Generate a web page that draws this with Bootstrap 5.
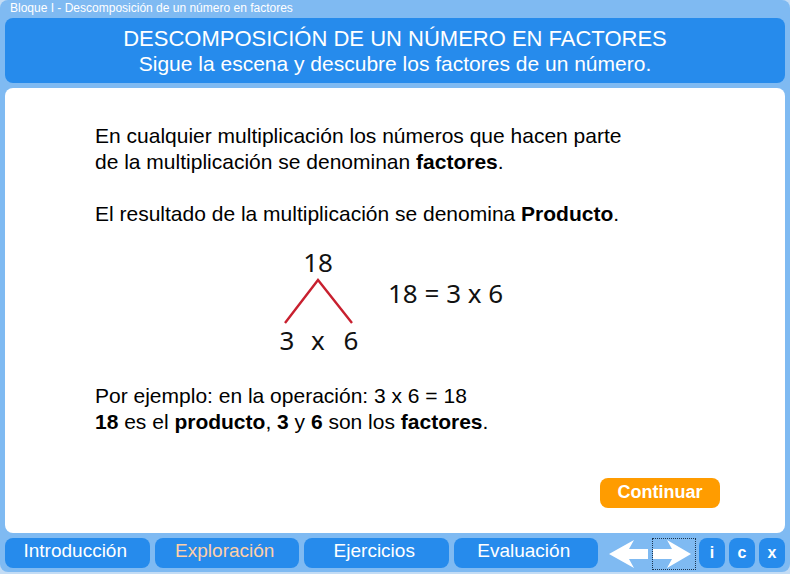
<!DOCTYPE html>
<html lang="es">
<head>
<meta charset="utf-8">
<meta name="viewport" content="width=device-width, initial-scale=1">
<title>Descomposición de un número en factores</title>
<link rel="stylesheet" href="https://cdn.jsdelivr.net/npm/bootstrap@5.3.0/dist/css/bootstrap.min.css">
<style>
  body { font-family: "Liberation Sans", Arial, sans-serif; background: #c3dcf5; color: #000; }
  .lesson { background: #7fbaf2; padding: 0 5px 4px; border-radius: 8px; margin-bottom: 2px; min-height: calc(100vh - 2px); }
  .crumb { font-size: 12px; line-height: 16px; height: 18px; padding-left: 5px; color: #fff; }
  .banner { background: #268bec; color: #fff; border-radius: 8px; padding: 8px 0 7px; margin-bottom: 5px; font-size: 21px; line-height: 25px; }
  .banner h1, .banner p { font-size: inherit; line-height: inherit; font-weight: 400; margin: 0; }
  .banner h1 { font-size: 22px; }
  .sheet { background: #fff; border-radius: 8px; padding: 35px 65px 25px 90px; margin-bottom: 5px; font-size: 21px; line-height: 26px; }
  .sheet p { margin: 0 0 26px; }
  .sheet .example { margin: 0; }
  .figure-row { font-family: "Noto Sans", "Open Sans", sans-serif; font-size: 26px; gap: 26px; padding-left: 182px; margin-top: -12px; margin-bottom: 24px; }
  .figure-row .equation { padding-top: 34px; line-height: 36px; color: #111; }
  .go { background: #ff9c00; color: #fff; border: 0; border-radius: 8px; width: 120px; height: 30px; font-size: 18px; line-height: 28px; font-weight: 700; padding: 0 0 2px; }
  .go:hover { background: #f09200; color: #fff; }
  .foot { gap: 3px; }
  .tabs { gap: 5px; }
  .tab { background: #268bec; color: #fff; border-radius: 8px; height: 30px; font-size: 19px; line-height: 26px; text-align: center; text-decoration: none; padding-right: 4px; }
  .tab.current { color: #ffd0a8; }
  .tab:hover { color: #ffd0a8; }
  .arrows { margin-left: 7px; }
  .arrow { background: none; border: 1px solid transparent; padding: 0; width: 44px; height: 32px; line-height: 0; margin-bottom: -2px; }
  .arrow.focused { border: 1px dotted #1c3550; }
  .tools { gap: 4px; }
  .tool { background: #268bec; color: #fff; border: 0; border-radius: 8px; width: 26px; height: 30px; padding: 0; font-size: 16px; font-weight: 700; line-height: 30px; }
</style>
<script src="https://cdn.jsdelivr.net/npm/bootstrap@5.3.0/dist/js/bootstrap.bundle.min.js"></script>
</head>
<body>
<div class="lesson d-flex flex-column">
  <div class="crumb">Bloque I - Descomposición de un número en factores</div>
  <header class="banner text-center">
    <h1>DESCOMPOSICIÓN DE UN NÚMERO EN FACTORES</h1>
    <p>Sigue la escena y descubre los factores de un número.</p>
  </header>
  <main class="sheet flex-grow-1 d-flex flex-column">
    <p>En cualquier multiplicación los números que hacen parte<br>de la multiplicación se denominan <b>factores</b>.</p>
    <p>El resultado de la multiplicación se denomina <b>Producto</b>.</p>
    <div class="figure-row d-flex">
      <svg width="85" height="118" viewBox="0 -8 85 118" role="img" aria-label="18 se descompone en 3 por 6">
        <g text-anchor="middle" fill="#111">
          <text x="41" y="23">18</text>
          <text x="10" y="101">3</text>
          <text x="41" y="101">x</text>
          <text x="74" y="101">6</text>
        </g>
        <path d="M8 74 41 31 75 74" fill="none" stroke="#c8202f" stroke-width="2.4"/>
      </svg>
      <div class="equation">18 = 3 x 6</div>
    </div>
    <p class="example">Por ejemplo: en la operación: 3 x 6 = 18<br><b>18</b> es el <b>producto</b>, <b>3</b> y <b>6</b> son los <b>factores</b>.</p>
    <button type="button" class="go btn align-self-end mt-auto">Continuar</button>
  </main>
  <footer class="foot d-flex">
    <nav class="tabs d-flex flex-grow-1" aria-label="Secciones">
      <a class="tab w-100" href="#introduccion">Introducción</a>
      <a class="tab current w-100" href="#exploracion" aria-current="page">Exploración</a>
      <a class="tab w-100" href="#ejercicios">Ejercicios</a>
      <a class="tab w-100" href="#evaluacion">Evaluación</a>
    </nav>
    <div class="arrows d-flex">
      <button type="button" class="arrow" aria-label="Anterior">
        <svg width="42" height="30" viewBox="0 0 42 30"><path d="M0 15 25 1 20 10H39V20H20L25 29Z" fill="#fff"/></svg>
      </button>
      <button type="button" class="arrow focused" aria-label="Siguiente">
        <svg width="42" height="30" viewBox="0 0 42 30"><path d="M38 15 14 1 19 10H0V20H19L14 29Z" fill="#fff"/></svg>
      </button>
    </div>
    <div class="tools d-flex">
      <button type="button" class="tool" aria-label="Información">i</button>
      <button type="button" class="tool" aria-label="Créditos">c</button>
      <button type="button" class="tool" aria-label="Cerrar">x</button>
    </div>
  </footer>
</div>
</body>
</html>
